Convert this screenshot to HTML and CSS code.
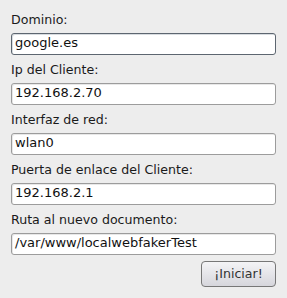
FILE: index.html
```html
<!DOCTYPE html>
<html>
<head>
<meta charset="utf-8">
<link rel="stylesheet" href="styles.css">
</head>
<body>
<div class="form">
  <div class="field">
    <div class="label">Dominio:</div>
    <div class="input focused">google.es</div>
  </div>
  <div class="field">
    <div class="label">Ip del Cliente:</div>
    <div class="input">192.168.2.70</div>
  </div>
  <div class="field">
    <div class="label">Interfaz de red:</div>
    <div class="input">wlan0</div>
  </div>
  <div class="field">
    <div class="label">Puerta de enlace del Cliente:</div>
    <div class="input">192.168.2.1</div>
  </div>
  <div class="field">
    <div class="label">Ruta al nuevo documento:</div>
    <div class="input">/var/www/localwebfakerTest</div>
  </div>
  <div class="actions">
    <div class="button">¡Iniciar!</div>
  </div>
</div>
</body>
</html>
```
FILE: styles.css
```css
html, body {
  margin: 0;
  padding: 0;
  background: #ededed;
  width: 287px;
  height: 298px;
  overflow: hidden;
}
.form {
  padding: 11px 11px 0 11px;
  width: 265px;
  display: flex;
  flex-direction: column;
  gap: 6px;
  font-family: "DejaVu Sans", sans-serif;
  color: #1a1a1a;
}
.field {
  display: flex;
  flex-direction: column;
  gap: 5px;
}
.label {
  font-size: 12.6px;
  line-height: 17px;
  height: 17px;
}
.input {
  box-sizing: border-box;
  height: 22px;
  border: 1px solid #9c9c9c;
  border-radius: 3px;
  background: #ffffff;
  font-size: 13px;
  line-height: 18px;
  padding-left: 3px;
  color: #111;
  box-shadow: inset 1px 1px 0 #e8e8e8;
}
.input.focused {
  border-color: #5d6670;
  box-shadow: inset 1px 1px 0 #d8dce0;
}
.actions {
  display: flex;
  justify-content: flex-end;
}
.button {
  box-sizing: border-box;
  width: 75px;
  height: 26px;
  border: 1px solid #777;
  border-radius: 4px;
  background: linear-gradient(#f4f4f6, #d6d6dc);
  font-size: 12.6px;
  line-height: 24px;
  text-align: center;
  color: #333;
}
```
